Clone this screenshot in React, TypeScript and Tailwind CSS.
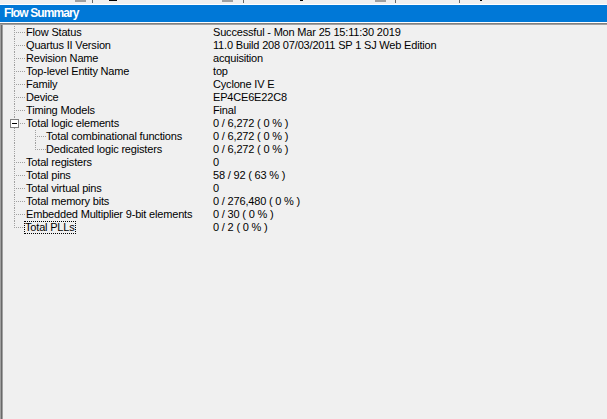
import React from "react";

type Kind = "node" | "last" | "parent" | "child" | "childLast";

const rows: { label: string; value: string; kind: Kind }[] = [
  { label: "Flow Status", value: "Successful - Mon Mar 25 15:11:30 2019", kind: "node" },
  { label: "Quartus II Version", value: "11.0 Build 208 07/03/2011 SP 1 SJ Web Edition", kind: "node" },
  { label: "Revision Name", value: "acquisition", kind: "node" },
  { label: "Top-level Entity Name", value: "top", kind: "node" },
  { label: "Family", value: "Cyclone IV E", kind: "node" },
  { label: "Device", value: "EP4CE6E22C8", kind: "node" },
  { label: "Timing Models", value: "Final", kind: "node" },
  { label: "Total logic elements", value: "0 / 6,272 ( 0 % )", kind: "parent" },
  { label: "Total combinational functions", value: "0 / 6,272 ( 0 % )", kind: "child" },
  { label: "Dedicated logic registers", value: "0 / 6,272 ( 0 % )", kind: "childLast" },
  { label: "Total registers", value: "0", kind: "node" },
  { label: "Total pins", value: "58 / 92 ( 63 % )", kind: "node" },
  { label: "Total virtual pins", value: "0", kind: "node" },
  { label: "Total memory bits", value: "0 / 276,480 ( 0 % )", kind: "node" },
  { label: "Embedded Multiplier 9-bit elements", value: "0 / 30 ( 0 % )", kind: "node" },
  { label: "Total PLLs", value: "0 / 2 ( 0 % )", kind: "last" },
];

const dot = { stroke: "#a0a0a0", strokeWidth: 1, strokeDasharray: "1 1", shapeRendering: "crispEdges" as const };

function Connector({ kind }: { kind: Kind }) {
  const isChild = kind === "child" || kind === "childLast";
  return (
    <svg width={isChild ? 46 : 26} height={13} className="shrink-0">
      {kind === "last" ? (
        <line x1={14.5} y1={0} x2={14.5} y2={7} {...dot} />
      ) : kind === "parent" ? (
        <>
          <line x1={14.5} y1={0} x2={14.5} y2={2} {...dot} />
          <line x1={14.5} y1={11} x2={14.5} y2={13} {...dot} />
        </>
      ) : (
        <line x1={14.5} y1={0} x2={14.5} y2={13} {...dot} />
      )}
      {kind === "parent" ? (
        <>
          <rect x={10.5} y={2.5} width={8} height={8} fill="#fff" stroke="#808080" shapeRendering="crispEdges" />
          <line x1={12} y1={6.5} x2={17} y2={6.5} stroke="#000" shapeRendering="crispEdges" />
          <line x1={20} y1={6.5} x2={25} y2={6.5} {...dot} />
          <line x1={35.5} y1={11} x2={35.5} y2={13} {...dot} />
        </>
      ) : null}
      {kind === "node" || kind === "last" ? <line x1={16} y1={6.5} x2={25} y2={6.5} {...dot} /> : null}
      {isChild ? (
        <>
          <line x1={35.5} y1={0} x2={35.5} y2={kind === "child" ? 13 : 7} {...dot} />
          <line x1={37} y1={6.5} x2={46} y2={6.5} {...dot} />
        </>
      ) : null}
    </svg>
  );
}

export default function App() {
  return (
    <div
      className="w-[607px] h-[419px] overflow-hidden bg-[#f0f0f0] flex flex-col text-[11px] text-black tracking-[-0.18px]"
      style={{ fontFamily: '"Liberation Sans", Arial, sans-serif' }}
    >
      {/* toolbar remnants */}
      <div className="h-[5px] flex items-start bg-[#f0f0f0] border-b border-white shrink-0">
        <span className="ml-[75px] w-[11px] h-[2px] bg-[#a0a0a0]" />
        <span className="ml-[6px] w-[1px] h-[3px] bg-[#696969]" />
        <span className="ml-[16px] w-[8px] h-[1px] bg-black" />
        <span className="ml-[105px] w-[11px] h-[2px] bg-[#a0a0a0]" />
        <span className="ml-[10px] w-[1px] h-[3px] bg-[#696969]" />
        <span className="ml-[56px] w-[3px] h-[1px] bg-black" />
        <span className="ml-[72px] w-[11px] h-[2px] bg-[#a0a0a0]" />
        <span className="ml-[9px] w-[1px] h-[3px] bg-[#696969]" />
        <span className="ml-[63px] w-[1px] h-[3px] bg-[#696969]" />
        <span className="ml-[20px] w-[2px] h-[1px] bg-black" />
      </div>

      <div className="h-[17px] bg-[#0078d7] text-white font-bold text-[12px] tracking-[-0.9px] leading-[17px] pl-[4px] shrink-0">
        Flow Summary
      </div>
      <div className="h-[1px] bg-white shrink-0" />
      <div className="h-[1px] bg-[#808080] shrink-0" />
      <div className="h-[1px] bg-[#a0a0a0] shrink-0" />

      <div className="flex-1 flex">
        <div className="w-[1px] bg-[#a0a0a0]" />
        <div className="w-[1px] bg-[#696969]" />
        <div className="w-[1px] bg-[#a0a0a0]" />
        <div className="flex-1 pt-[1px] -ml-[3px]">
          {rows.map((r) => (
            <div key={r.label} className="flex h-[13px] leading-[13px] items-center">
              <div className="flex w-[213px] shrink-0 items-center">
                <Connector kind={r.kind} />
                <span
                  className={
                    r.kind === "last"
                      ? "px-[1px] -ml-[2px] outline outline-1 outline-dotted outline-black -outline-offset-1 leading-[13px]"
                      : "whitespace-nowrap"
                  }
                >
                  {r.label}
                </span>
              </div>
              <span className="whitespace-nowrap">{r.value}</span>
            </div>
          ))}
        </div>
      </div>
    </div>
  );
}
